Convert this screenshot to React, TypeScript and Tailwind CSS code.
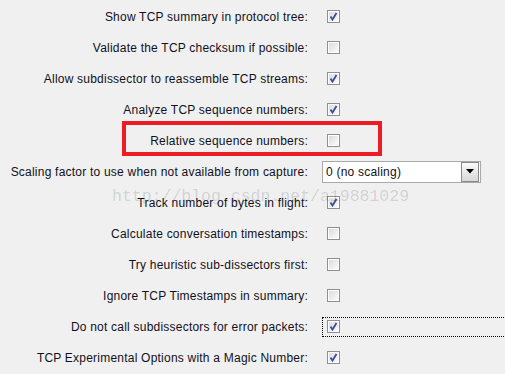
import React from 'react'

type Row =
  | { kind: 'check'; label: string; checked: boolean; focus?: boolean }
  | { kind: 'combo'; label: string; value: string }

const rows: Row[] = [
  { kind: 'check', label: 'Show TCP summary in protocol tree:', checked: true },
  { kind: 'check', label: 'Validate the TCP checksum if possible:', checked: false },
  { kind: 'check', label: 'Allow subdissector to reassemble TCP streams:', checked: true },
  { kind: 'check', label: 'Analyze TCP sequence numbers:', checked: true },
  { kind: 'check', label: 'Relative sequence numbers:', checked: false },
  { kind: 'combo', label: 'Scaling factor to use when not available from capture:', value: '0 (no scaling)' },
  { kind: 'check', label: 'Track number of bytes in flight:', checked: true },
  { kind: 'check', label: 'Calculate conversation timestamps:', checked: false },
  { kind: 'check', label: 'Try heuristic sub-dissectors first:', checked: false },
  { kind: 'check', label: 'Ignore TCP Timestamps in summary:', checked: false },
  { kind: 'check', label: 'Do not call subdissectors for error packets:', checked: true, focus: true },
  { kind: 'check', label: 'TCP Experimental Options with a Magic Number:', checked: true },
]

function CheckBox({ checked }: { checked: boolean }) {
  return (
    <div className="w-[13px] h-[13px] border border-[#8e8f8f] bg-white p-px">
      <div className="w-full h-full bg-gradient-to-br from-[#dcdcdc] to-[#fbfbfb] relative">
        {checked && (
          <svg width="11" height="11" viewBox="0 0 11 11" className="absolute -left-px -top-px">
            <path d="M2.5 5.5 L4.5 8.5 L8.5 2" fill="none" stroke="#3b4f9c" strokeWidth="1.8" />
          </svg>
        )}
      </div>
    </div>
  )
}

function Combo({ value }: { value: string }) {
  return (
    <div className="w-[159px] h-[22px] border border-[#a9a9a9] bg-white flex items-center justify-between pl-[3px] pr-px">
      <span>{value}</span>
      <div className="w-[18px] h-[20px] border border-[#8a8a8a] bg-gradient-to-b from-[#fafafa] to-[#d8d8d8] flex items-center justify-center">
        <svg width="8" height="5" viewBox="0 0 8 5">
          <path d="M0 0 H8 L4 4.5 Z" fill="#000" />
        </svg>
      </div>
    </div>
  )
}

export default function App() {
  return (
    <div
      className="relative w-[505px] h-[374px] bg-[#f0f0f0] overflow-hidden text-[12px] tracking-[0.22px] text-[#101020]"
      style={{ fontFamily: '"Liberation Sans", Arial, sans-serif' }}
    >
      <div className="pt-px">
        {rows.map((row, i) => (
          <div key={i} className="flex items-center h-[31px]">
            <div className="w-[308px] shrink-0 text-right whitespace-nowrap">{row.label}</div>
            {row.kind === 'combo' ? (
              <div className="ml-[14px]">
                <Combo value={row.value} />
              </div>
            ) : (
              <div
                className={`ml-[14px] w-[200px] shrink-0 h-[20px] flex items-center pl-[4px] ${
                  row.focus ? 'border border-dotted border-black' : 'border border-transparent'
                }`}
              >
                <CheckBox checked={row.checked} />
              </div>
            )}
          </div>
        ))}
      </div>

      {/* watermark */}
      <div
        className="absolute left-[112px] top-[185px] text-[16.5px] tracking-normal text-[rgba(0,0,0,0.14)] whitespace-nowrap pointer-events-none"
        style={{ fontFamily: '"Liberation Mono", monospace' }}
      >
        http://blog.csdn.net/a19881029
      </div>

      {/* red highlight */}
      <div className="absolute left-[122px] top-[121px] w-[260px] h-[35px] border-[4px] border-[#ec1c24] pointer-events-none" />
    </div>
  )
}
